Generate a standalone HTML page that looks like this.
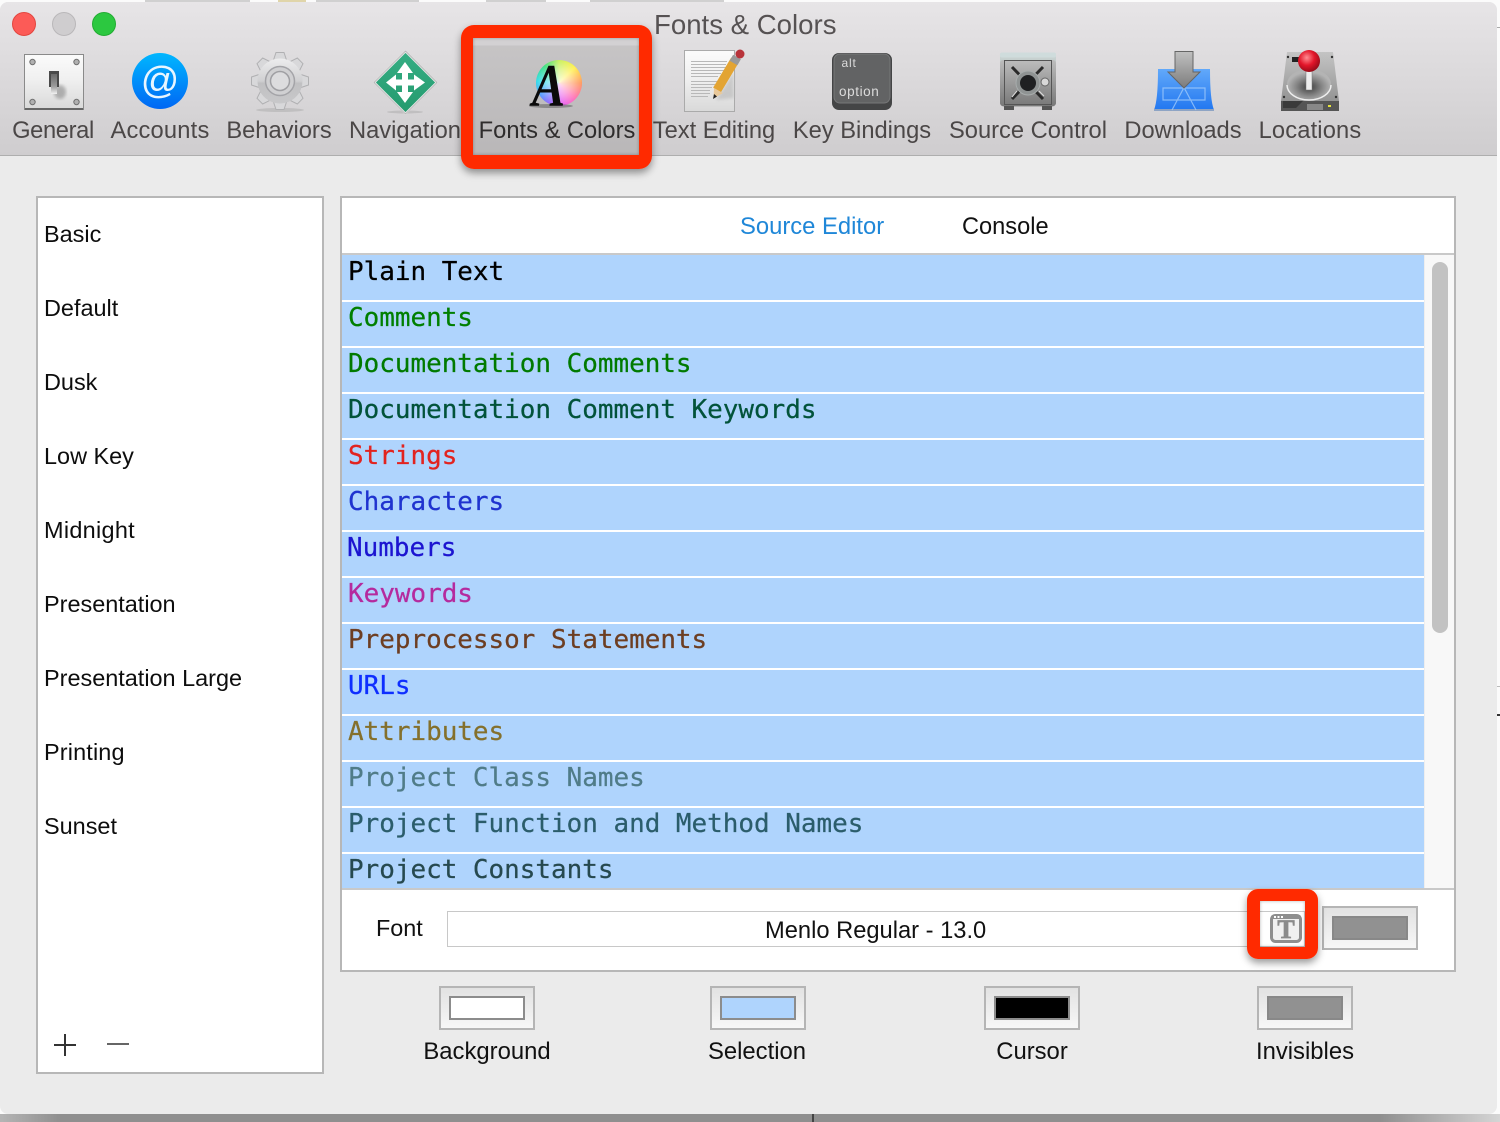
<!DOCTYPE html>
<html><head><meta charset="utf-8"><title>Fonts &amp; Colors</title>
<style>
html,body{margin:0;padding:0}
body{width:1500px;height:1122px;overflow:hidden;position:relative;background:#fbfbfb;font-family:"Liberation Sans",sans-serif}
div,span{position:absolute;box-sizing:border-box}
#win{left:0;top:2px;width:1497px;height:1112px;background:#ebebeb;border-radius:8px 8px 8px 8px;overflow:hidden}
#bar{left:0;top:0;width:1497px;height:154px;background:linear-gradient(#e7e5e7,#cfcdcf);border-bottom:1px solid #aeaeae}
.t{white-space:nowrap;line-height:30px;height:30px}
.tb{top:116px;font-size:23.7px;color:#4b4747;width:180px;text-align:center}
.li{left:44px;font-size:23.45px;color:#0d0d0d}
.lab{top:1037px;font-size:23.85px;color:#111;width:180px;text-align:center}
.m{left:348px;font-family:"DejaVu Sans Mono","Liberation Mono",monospace;font-size:25.95px;white-space:nowrap;line-height:30px;height:30px;-webkit-text-stroke:.25px currentColor}
.wl{left:342px;width:1082px;height:2px;background:#fff}
.sw{width:96px;height:44px;border:2px solid #b5b5b5;background:linear-gradient(#e2e2e2,#f7f7f7)}
.sw i{position:absolute;display:block;left:8px;top:8px;width:76px;height:24px;border:2px solid #8c8c8c;box-sizing:border-box}
</style></head>
<body>
<!-- stuff behind the window -->
<div style="left:145px;top:0;width:105px;height:2px;background:#d0d0d0"></div>
<div style="left:278px;top:0;width:28px;height:2px;background:#e0d5aa"></div>
<div style="left:316px;top:0;width:103px;height:2px;background:#d0d0d0"></div>
<div style="left:486px;top:0;width:60px;height:2px;background:#d0d0d0"></div>
<div style="left:590px;top:0;width:134px;height:2px;background:#d0d0d0"></div>
<div style="left:1497px;top:27px;width:3px;height:1px;background:#aaa"></div>
<div style="left:1497px;top:686px;width:3px;height:1px;background:#bbb"></div>
<div style="left:1497px;top:714px;width:3px;height:2px;background:#333"></div>
<div style="left:0;top:1114px;width:1500px;height:8px;background:linear-gradient(90deg,#b5b5b5 0,#8f8f8f 60px,#8f8f8f 1380px,#d5d5d5 1500px)"></div>
<div style="left:812px;top:1114px;width:2px;height:8px;background:#444"></div>

<div id="win">
  <div id="bar"></div>
</div>

<!-- traffic lights -->
<div style="left:12px;top:12px;width:24px;height:24px;border-radius:50%;background:#fc5b57;border:1px solid #e2463f"></div>
<div style="left:52px;top:12px;width:24px;height:24px;border-radius:50%;background:#cfcdcf;border:1px solid #b9b7b9"></div>
<div style="left:92px;top:12px;width:24px;height:24px;border-radius:50%;background:#2cc840;border:1px solid #22ac32"></div>
<div class="t" style="left:654px;top:10px;font-size:27.6px;color:#565253">Fonts &amp; Colors</div>

<!-- selected tab -->
<div style="left:473px;top:38px;width:166px;height:117px;background:linear-gradient(#d3d1d3 0,#d3d1d3 7px,#c6c4c5 8px,#b9b7b8 100%)"></div>
<div style="left:536px;top:60px;width:46px;height:46px;border-radius:50%;background:radial-gradient(circle closest-side,rgba(255,255,255,.8) 0,rgba(255,255,255,.4) 55%,rgba(255,255,255,0) 100%),conic-gradient(#c8f060 0,#fff050 45deg,#ff9a60 90deg,#ff70b8 135deg,#e860f0 170deg,#8a6cff 210deg,#50a0ff 240deg,#30dce8 275deg,#40e080 320deg,#c8f060 360deg)"></div>

<!-- toolbar labels -->
<div class="t tb" style="left:-37px;letter-spacing:-.35px">General</div>
<div class="t tb" style="left:70px;letter-spacing:.2px">Accounts</div>
<div class="t tb" style="left:189px">Behaviors</div>
<div class="t tb" style="left:315px">Navigation</div>
<div class="t tb" style="left:467px;color:#2f2d2d">Fonts &amp; Colors</div>
<div class="t tb" style="left:624px">Text Editing</div>
<div class="t tb" style="left:772px">Key Bindings</div>
<div class="t tb" style="left:938px">Source Control</div>
<div class="t tb" style="left:1093px">Downloads</div>
<div class="t tb" style="left:1220px;letter-spacing:.15px">Locations</div>

<!-- left list -->
<div style="left:36px;top:196px;width:288px;height:878px;background:#fff;border:2px solid #b7b7b7"></div>
<div class="t li" style="top:219px">Basic</div>
<div class="t li" style="top:293px">Default</div>
<div class="t li" style="top:367px">Dusk</div>
<div class="t li" style="top:441px">Low Key</div>
<div class="t li" style="top:515px;letter-spacing:.3px">Midnight</div>
<div class="t li" style="top:589px">Presentation</div>
<div class="t li" style="top:663px">Presentation Large</div>
<div class="t li" style="top:737px;letter-spacing:.15px">Printing</div>
<div class="t li" style="top:811px">Sunset</div>
<div style="left:54px;top:1044px;width:22px;height:2px;background:#333"></div>
<div style="left:64px;top:1034px;width:2px;height:22px;background:#333"></div>
<div style="left:107px;top:1043px;width:22px;height:2px;background:#666"></div>

<!-- main panel -->
<div style="left:340px;top:196px;width:1116px;height:776px;background:#fff;border:2px solid #b7b7b7"></div>
<div class="t" style="left:740px;top:212px;font-size:23.8px;color:#1f87d8">Source Editor</div>
<div class="t" style="left:962px;top:212px;font-size:23.6px;color:#111">Console</div>
<div style="left:342px;top:253px;width:1112px;height:2px;background:#c9c9c9"></div>
<div style="left:342px;top:255px;width:1082px;height:633px;background:#afd4fd"></div>
<div style="left:1424px;top:255px;width:30px;height:633px;background:#f8f8f8;border-left:1px solid #eee"></div>
<div style="left:1432px;top:262px;width:16px;height:371px;border-radius:8px;background:#c2c2c2"></div>
<div style="left:342px;top:888px;width:1112px;height:2px;background:#c9c9c9"></div>

<div class="wl" style="top:300px"></div><div class="wl" style="top:346px"></div><div class="wl" style="top:392px"></div>
<div class="wl" style="top:438px"></div><div class="wl" style="top:484px"></div><div class="wl" style="top:530px"></div>
<div class="wl" style="top:576px"></div><div class="wl" style="top:622px"></div><div class="wl" style="top:668px"></div>
<div class="wl" style="top:714px"></div><div class="wl" style="top:760px"></div><div class="wl" style="top:806px"></div>
<div class="wl" style="top:852px"></div>

<div class="m" style="top:257px;color:#000">Plain Text</div>
<div class="m" style="top:303px;color:#007f00">Comments</div>
<div class="m" style="top:349px;color:#007a00">Documentation Comments</div>
<div class="m" style="top:395px;color:#02533a">Documentation Comment Keywords</div>
<div class="m" style="top:441px;color:#e2231f">Strings</div>
<div class="m" style="top:487px;color:#1f33cf">Characters</div>
<div class="m" style="top:533px;left:347px;color:#1c14d0">Numbers</div>
<div class="m" style="top:579px;color:#b52a9e">Keywords</div>
<div class="m" style="top:625px;color:#6d3e22">Preprocessor Statements</div>
<div class="m" style="top:671px;color:#0e2eff">URLs</div>
<div class="m" style="top:717px;color:#84702c">Attributes</div>
<div class="m" style="top:763px;color:#507c88">Project Class Names</div>
<div class="m" style="top:809px;color:#2b5d6b">Project Function and Method Names</div>
<div class="m" style="top:855px;color:#26494f">Project Constants</div>

<!-- font row -->
<div class="t" style="left:376px;top:913px;font-size:23.4px;color:#111">Font</div>
<div style="left:447px;top:911px;width:858px;height:36px;background:#fff;border:1px solid #c8c8c8"></div>
<div class="t" style="left:765px;top:916px;font-size:23.7px;color:#111">Menlo Regular - 13.0</div>
<div class="sw" style="left:1322px;top:906px"><i style="background:#919191;border-color:#888"></i></div>

<!-- swatches -->
<div class="sw" style="left:439px;top:986px"><i style="background:#fff"></i></div>
<div class="sw" style="left:710px;top:986px"><i style="background:#afd4fd"></i></div>
<div class="sw" style="left:984px;top:986px"><i style="background:#000"></i></div>
<div class="sw" style="left:1257px;top:986px"><i style="background:#919191;border-color:#888"></i></div>
<div class="t lab" style="left:397px">Background</div>
<div class="t lab" style="left:667px">Selection</div>
<div class="t lab" style="left:942px">Cursor</div>
<div class="t lab" style="left:1215px">Invisibles</div>

<!-- icons -->
<svg width="1500" height="1122" viewBox="0 0 1500 1122" style="position:absolute;left:0;top:0">
<defs>
<linearGradient id="g1" x1="0" y1="0" x2="0" y2="1"><stop offset="0" stop-color="#fbfbfb"/><stop offset=".45" stop-color="#f0f0f0"/><stop offset="1" stop-color="#d9d9d9"/></linearGradient>
<linearGradient id="g2" x1="0" y1="0" x2="0" y2="1"><stop offset="0" stop-color="#00b7ff"/><stop offset="1" stop-color="#0067f4"/></linearGradient>
<linearGradient id="g3" x1="0" y1="0" x2="0" y2="1"><stop offset="0" stop-color="#ededee"/><stop offset=".5" stop-color="#d0d0d2"/><stop offset=".55" stop-color="#c0c0c2"/><stop offset="1" stop-color="#c8c8ca"/></linearGradient>
<linearGradient id="g4" x1="0" y1="0" x2="0" y2="1"><stop offset="0" stop-color="#cfdad9"/><stop offset="1" stop-color="#8a8a8a"/></linearGradient>
<linearGradient id="g5" x1="0" y1="0" x2="0" y2="1"><stop offset="0" stop-color="#62a9fa"/><stop offset="1" stop-color="#2277f0"/></linearGradient>
<linearGradient id="g6" x1="0" y1="0" x2="0" y2="1"><stop offset="0" stop-color="#bdbdbd"/><stop offset="1" stop-color="#787878"/></linearGradient>
<linearGradient id="g7" x1="0" y1="0" x2="0" y2="1"><stop offset="0" stop-color="#c0c0c0"/><stop offset="1" stop-color="#7c7c7c"/></linearGradient>
<linearGradient id="g10" x1="0" y1="0" x2="0" y2="1"><stop offset="0" stop-color="#c4c4c4"/><stop offset="1" stop-color="#8a8a8a"/></linearGradient>
<linearGradient id="g11" x1="0" y1="0" x2="0" y2="1"><stop offset="0" stop-color="#6a6a6a"/><stop offset=".6" stop-color="#9a9a9a"/><stop offset="1" stop-color="#f2f2f2"/></linearGradient>
<linearGradient id="g12" x1="0" y1="0" x2="0" y2="1"><stop offset="0" stop-color="#36ae84"/><stop offset="1" stop-color="#249a6e"/></linearGradient>
<radialGradient id="g8" cx=".4" cy=".35" r=".7"><stop offset="0" stop-color="#ff8d92"/><stop offset=".5" stop-color="#e3162a"/><stop offset="1" stop-color="#8d0a16"/></radialGradient>
<radialGradient id="g13" cx=".5" cy=".6" r=".5"><stop offset="0" stop-color="#3e3e3e"/><stop offset=".6" stop-color="#888"/><stop offset="1" stop-color="#b4b4b4"/></radialGradient>
<filter id="bl"><feGaussianBlur stdDeviation="1.5"/></filter>
</defs>

<!-- General -->
<rect x="24.500" y="54.500" width="59" height="55" fill="url(#g1)" stroke="#8a8a8a"/>
<rect x="25" y="108" width="58" height="2" fill="#666"/>
<g fill="#b0b0b0" stroke="#707070"><circle cx="32.500" cy="62" r="2.700"/><circle cx="76.500" cy="62" r="2.700"/><circle cx="32.500" cy="102" r="2.700"/><circle cx="76.500" cy="102" r="2.700"/></g>
<ellipse cx="60" cy="92" rx="6" ry="7" fill="#888" opacity=".6" filter="url(#bl)"/>
<rect x="49" y="71" width="10" height="16" fill="#4a4a4a"/>
<rect x="51" y="74" width="6" height="20" fill="url(#g11)"/>

<!-- Accounts -->
<circle cx="160" cy="81" r="28" fill="url(#g2)"/>
<text x="160" y="93" text-anchor="middle" font-family="Liberation Sans" font-size="38" fill="#e8f6ff">@</text>

<!-- Behaviors gear -->
<ellipse cx="280" cy="110" rx="24" ry="2" fill="#aaa" opacity=".5"/>
<g fill="#d8d8da" stroke="#b0b0b2">
<path d="M273.500 60 276 52.500H284L286.500 60Z"/>
<path d="M273.500 60 276 52.500H284L286.500 60Z" transform="rotate(45 280 81)"/>
<path d="M273.500 60 276 52.500H284L286.500 60Z" transform="rotate(90 280 81)"/>
<path d="M273.500 60 276 52.500H284L286.500 60Z" transform="rotate(135 280 81)"/>
<path d="M273.500 60 276 52.500H284L286.500 60Z" transform="rotate(180 280 81)"/>
<path d="M273.500 60 276 52.500H284L286.500 60Z" transform="rotate(225 280 81)"/>
<path d="M273.500 60 276 52.500H284L286.500 60Z" transform="rotate(270 280 81)"/>
<path d="M273.500 60 276 52.500H284L286.500 60Z" transform="rotate(315 280 81)"/>
</g>
<circle cx="280" cy="81" r="22.500" fill="url(#g3)"/>
<circle cx="280" cy="81" r="14.500" fill="#d0d0d2" stroke="#a4a4a8" stroke-width="1.500"/>
<circle cx="280" cy="81" r="9.500" fill="#dcdcde" stroke="#9f9fa3" stroke-width="1.500"/>

<!-- Navigation -->
<ellipse cx="405" cy="112" rx="18" ry="1.500" fill="#aaa" opacity=".5"/>
<path d="M405.500 51.500 436.500 82.500 405.500 113.500 374.500 82.500Z" fill="url(#g12)" stroke="#e4e4e4" stroke-width="2"/>
<path d="M405.500 51 437 82.500 405.500 114 374 82.500Z" fill="none" stroke="#a5a5a5" stroke-width=".6"/>
<path d="M405 62 413 73H408V79.500H414V74.500L425 82.500 414 90.500V85.500H408V92H413L405 103 397 92H402V85.500H396V90.500L386 82.500 396 74.500V79.500H402V73H397Z" fill="#fff"/>

<!-- Fonts & Colors -->
<ellipse cx="551" cy="106" rx="22" ry="2" fill="#555" opacity=".5"/>
<text transform="translate(532 105.500) scale(.8 .98)" font-family="Liberation Serif" font-weight="bold" font-style="italic" font-size="62" fill="#0a0a0a">A</text>

<!-- Text Editing -->
<rect x="684.500" y="50.500" width="50" height="61" fill="url(#g1)" stroke="#aaa"/>
<path d="M716 100 734 70V98Z" fill="#bbb" opacity=".7" filter="url(#bl)"/>
<g fill="#b8b8b8"><rect x="691" y="61" width="36" height="1"/><rect x="691" y="64" width="35" height="1"/><rect x="691" y="67" width="36" height="1"/><rect x="691" y="70" width="33" height="1"/><rect x="691" y="73" width="30" height="1"/><rect x="691" y="76" width="27" height="1"/><rect x="691" y="81" width="26" height="1"/><rect x="691" y="84" width="24" height="1"/><rect x="691" y="87" width="21" height="1"/><rect x="691" y="90" width="19" height="1"/><rect x="691" y="93" width="19" height="1"/><rect x="691" y="96" width="17" height="1"/></g>
<path d="M717 90 735 60" stroke="#e3a433" stroke-width="9" fill="none"/>
<path d="M713.500 98.500 714 88 723 93Z" fill="#e8c89a"/>
<path d="M713 99 714 94 717 96.500Z" fill="#222"/>
<path d="M733.500 63 737 57" stroke="#9a9a9a" stroke-width="9" fill="none"/>
<circle cx="740" cy="54" r="4.500" fill="#b8333a"/>

<!-- Key Bindings -->
<rect x="832" y="53" width="60" height="57" rx="7" fill="#444546"/>
<rect x="834" y="54" width="56" height="49" rx="6" fill="#626364" stroke="#777879"/>
<text x="841.500" y="67" font-family="Liberation Sans" font-size="12" letter-spacing=".8" fill="#dcdcdc">alt</text>
<text x="839" y="96" font-family="Liberation Sans" font-size="13.500" letter-spacing=".6" fill="#dcdcdc">option</text>

<!-- Source Control safe -->
<rect x="1000" y="52.500" width="56" height="54" rx="4" fill="url(#g4)"/>
<rect x="1000" y="52.500" width="56" height="5" rx="2" fill="#cfdcdc"/>
<rect x="1004" y="106" width="10" height="4" fill="#555"/>
<rect x="1042" y="106" width="10" height="4" fill="#555"/>
<rect x="1000" y="60" width="56" height="46" rx="3" fill="url(#g6)"/>
<rect x="1004.500" y="60.500" width="47" height="44" fill="none" stroke="#555"/>
<path d="M1012 67 1043 99M1043 67 1012 99" stroke="#2a2a2a" stroke-width="3"/>
<path d="M1017 91 1012 97M1039 91 1044 96" stroke="#ddd" stroke-width="1"/>
<circle cx="1028" cy="83" r="12" fill="#8f9393" stroke="#a8adad"/>
<circle cx="1028" cy="83" r="8" fill="#1f2022"/>
<circle cx="1045" cy="82" r="4" fill="#d8d8d8" stroke="#666"/>

<!-- Downloads -->
<path d="M1158 69H1210Q1210 100 1214 110H1154Q1158 100 1158 69Z" fill="url(#g5)"/>
<rect x="1154" y="109" width="60" height="2" fill="#8ea4c4"/>
<path d="M1172 110 1188 80M1196 110 1180 80M1163 88H1205V100H1163Z" fill="none" stroke="#a6cdfb" stroke-width="1.200" opacity=".75"/>
<path d="M1175 51.500H1193V72H1200L1184 88 1168 72H1175Z" fill="url(#g7)" stroke="#666"/>

<!-- Locations -->
<path d="M1287 52H1333L1339 101V111H1281V101Z" fill="url(#g10)"/>
<path d="M1281 101H1339V111H1281Z" fill="#555"/>
<path d="M1283 101H1303L1296 108H1283Z" fill="#3a3a3a"/>
<rect x="1307" y="104" width="16" height="6" fill="#888"/>
<rect x="1328" y="105" width="3" height="2" fill="#e6e33a"/>
<g fill="#333"><circle cx="1288" cy="57" r="1.200"/><circle cx="1332" cy="57" r="1.200"/><circle cx="1284" cy="97" r="1.200"/><circle cx="1336" cy="97" r="1.200"/></g>
<ellipse cx="1309" cy="84" rx="22" ry="15" fill="url(#g13)"/>
<path d="M1287 85A22 15 0 0 0 1331 85" fill="none" stroke="#eee" stroke-width="1.500"/>
<rect x="1292" y="57" width="7" height="5" fill="#222"/>
<rect x="1306" y="70" width="6" height="20" fill="#eee" stroke="#777" stroke-width=".5"/>
<circle cx="1309" cy="61" r="11" fill="url(#g8)"/>

<!-- Font panel icon -->
<rect x="1271.500" y="915.500" width="29" height="26" rx="4" fill="#f0f0f0" stroke="#8e8e8e" stroke-width="3"/>
<rect x="1271" y="915" width="30" height="4" rx="2" fill="#8e8e8e"/>
<g fill="#fff"><rect x="1274" y="916" width="2" height="2"/><rect x="1277.500" y="916" width="2" height="2"/><rect x="1281" y="916" width="2" height="2"/></g>
<text x="1286" y="938" text-anchor="middle" font-family="Liberation Serif" font-weight="bold" font-size="26" fill="#8b8b8b" stroke="#8b8b8b" stroke-width=".7">T</text>
</svg>

<!-- red highlight boxes -->
<div style="left:461px;top:25px;width:191px;height:144px;border:solid #ff2a00;border-width:13px 13px 14px 12px;border-radius:13px;box-shadow:0 4px 8px rgba(0,0,0,.4),inset 0 0 3px rgba(0,0,0,.3)"></div>
<div style="left:1247px;top:889px;width:71px;height:70px;border:solid #ff2a00;border-width:12px 13px 12px 13px;border-radius:11px;box-shadow:0 4px 8px rgba(0,0,0,.4),inset 0 0 3px rgba(0,0,0,.3)"></div>
</body></html>
